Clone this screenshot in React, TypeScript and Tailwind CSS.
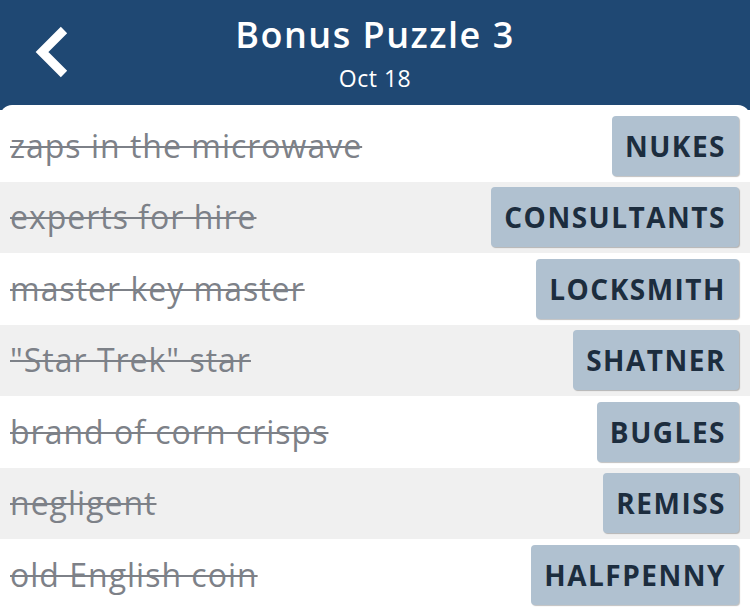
import React from "react";

const rows = [
  { clue: "zaps in the microwave", answer: "NUKES" },
  { clue: "experts for hire", answer: "CONSULTANTS" },
  { clue: "master key master", answer: "LOCKSMITH" },
  { clue: "\"Star Trek\" star", answer: "SHATNER" },
  { clue: "brand of corn crisps", answer: "BUGLES" },
  { clue: "negligent", answer: "REMISS" },
  { clue: "old English coin", answer: "HALFPENNY" },
];

export default function App() {
  return (
    <div className="w-[750px] h-[608px] overflow-hidden bg-[#1f4873] flex flex-col" style={{ fontFamily: "'Open Sans', 'Noto Sans', sans-serif" }}>
      <div className="h-[105px] relative flex flex-col items-center shrink-0">
        <svg className="absolute left-[32px] top-[25px]" width="40" height="54" viewBox="0 0 40 54">
          <path d="M32 5 L10 27 L32 49" fill="none" stroke="white" strokeWidth="9" strokeLinecap="butt" strokeLinejoin="miter" />
        </svg>
        <div className="mt-[11px] text-white text-[36px] leading-[48px] font-semibold tracking-[1.5px]">Bonus Puzzle 3</div>
        <div className="text-white text-[23px] leading-[28px] mt-[5px] tracking-[0.5px]">Oct 18</div>
      </div>
      <div className="flex-1 bg-white rounded-t-[12px] pt-[5px]">
        {rows.map((r, i) => (
          <div
            key={i}
            className={`h-[71.5px] flex items-center justify-between pl-[10px] pr-[11px] ${i % 2 === 1 ? "bg-[#f0f0f0]" : "bg-white"}`}
          >
            <span className="text-[32px] tracking-[1px] text-[#7d8188] line-through decoration-[2px] decoration-[#7d8188]">{r.clue}</span>
            <span className="h-[60px] px-[13px] flex items-center rounded-[4px] bg-[#b0c1d0] shadow-[1px_1px_1px_rgba(0,0,0,0.25)] text-[28px] font-bold tracking-[1.5px] text-[#1c2d3e]">
              {r.answer}
            </span>
          </div>
        ))}
      </div>
    </div>
  );
}
